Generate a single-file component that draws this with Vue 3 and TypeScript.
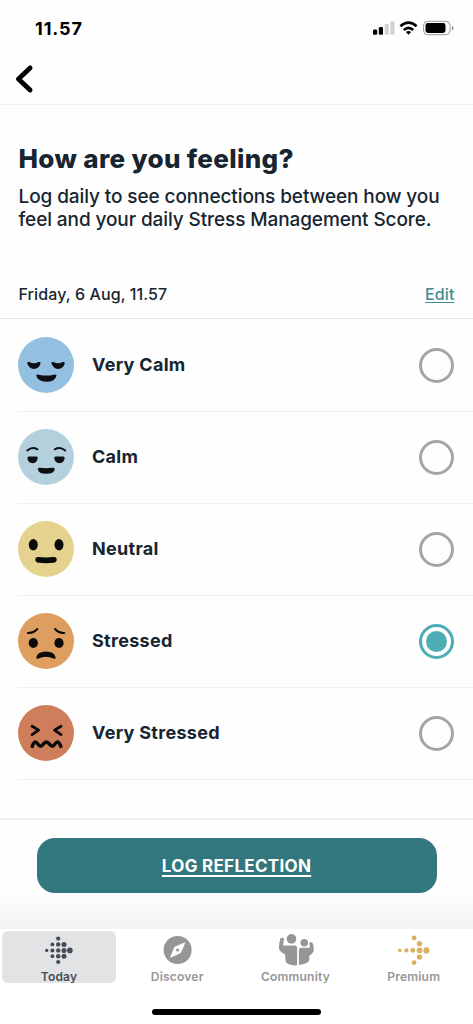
<script setup lang="ts">
import { ref } from 'vue'

interface Mood {
  id: string
  label: string
  color: string
}

interface Dot {
  x: number
  y: number
  r: number
}

const moods: Mood[] = [
  { id: 'very-calm', label: 'Very Calm', color: '#93bfe0' },
  { id: 'calm', label: 'Calm', color: '#b5d0dd' },
  { id: 'neutral', label: 'Neutral', color: '#e4d28e' },
  { id: 'stressed', label: 'Stressed', color: '#de9e60' },
  { id: 'very-stressed', label: 'Very Stressed', color: '#cf7e5b' },
]

const tabs = ['Today', 'Discover', 'Community', 'Premium']

const selected = ref('stressed')
const activeTab = ref('Today')

const todayDots: Dot[] = [
  { x: 17.2, y: 6.6, r: 2.1 },
  { x: 11.4, y: 12.4, r: 1.9 },
  { x: 17.2, y: 12.4, r: 2.2 },
  { x: 23, y: 12.4, r: 2.5 },
  { x: 5.7, y: 18.4, r: 1.7 },
  { x: 11.4, y: 18.4, r: 2 },
  { x: 17.2, y: 18.4, r: 2.2 },
  { x: 23, y: 18.4, r: 2.5 },
  { x: 28.9, y: 18.4, r: 2.8 },
  { x: 11.4, y: 24.2, r: 1.9 },
  { x: 17.2, y: 24.2, r: 2.2 },
  { x: 23, y: 24.2, r: 2.5 },
  { x: 17.2, y: 30, r: 2.1 },
]

const premiumDots: Dot[] = [
  { x: 18.1, y: 6, r: 2.4 },
  { x: 23.5, y: 11.6, r: 2.7 },
  { x: 3.8, y: 18.4, r: 1.8 },
  { x: 10.4, y: 18.4, r: 2.1 },
  { x: 16.8, y: 18.4, r: 2.4 },
  { x: 23.5, y: 18.4, r: 2.8 },
  { x: 30.4, y: 18.4, r: 3.1 },
  { x: 23.5, y: 25.1, r: 2.7 },
  { x: 18.1, y: 30.6, r: 2.4 },
]
</script>

<template>
  <main class="screen">
    <header class="status">
      <span class="clock">11.57</span>
      <svg class="indicators" width="82" height="16" viewBox="0 0 82 16">
        <rect x="0" y="9.5" width="4.2" height="5.3" rx="1.2" fill="#000" />
        <rect x="5.8" y="7" width="4.2" height="7.8" rx="1.2" fill="#000" />
        <rect x="11.7" y="4" width="4.2" height="10.8" rx="1.2" fill="#d2d2d2" />
        <rect x="17.3" y="1.3" width="4.2" height="13.5" rx="1.2" fill="#d2d2d2" />
        <g fill="none" stroke="#000" stroke-width="2.6">
          <path d="M27.4 6.3Q35.5-1.2 43.6 6.3" />
          <path d="M30.8 10Q35.5 5.6 40.2 10" />
        </g>
        <path d="M32.9 12Q35.5 9.9 38.1 12L35.5 14.8Z" fill="#000" />
        <rect x="50.6" y="1.3" width="26.4" height="13.4" rx="4" fill="none" stroke="#999" />
        <rect x="52.5" y="3.1" width="20" height="9.9" rx="2.4" fill="#000" />
        <path d="M78.8 5.8Q80.6 6.5 80.6 8.2Q80.6 9.9 78.8 10.6Z" fill="#999" />
      </svg>
    </header>

    <nav class="topbar">
      <button class="back" aria-label="Back">
        <svg width="20" height="30" viewBox="0 0 20 30">
          <path d="M15.1 3.9L3.4 15L15.1 26.1" fill="none" stroke="#000" stroke-width="4.8" stroke-linecap="round" stroke-linejoin="round" />
        </svg>
      </button>
    </nav>

    <section class="intro">
      <h1>How are you feeling?</h1>
      <p>Log daily to see connections between how you<br />feel and your daily Stress Management Score.</p>
    </section>

    <div class="date-row">
      <span class="date">Friday, 6 Aug, 11.57</span>
      <a class="edit">Edit</a>
    </div>

    <ul class="moods">
      <li v-for="mood in moods" :key="mood.id" class="mood" @click="selected = mood.id">
        <svg class="face" width="56" height="56" viewBox="0 0 56 56">
          <circle cx="28" cy="28" r="28" :fill="mood.color" />
          <g v-if="mood.id === 'very-calm'" fill="#0c0f14">
            <path d="M9.2 26Q9.2 24.4 11.3 25.1Q16 27.6 20.4 25.1Q22.8 24.4 22.6 26.6Q20.8 32 16 32Q10.7 31.6 9.2 26Z" />
            <path d="M33.4 26Q33.4 24.4 35.5 25.1Q40.2 27.6 44.6 25.1Q47 24.4 46.8 26.6Q45 32 40.2 32Q34.9 31.6 33.4 26Z" />
            <path d="M18.2 38.6Q18.4 37 20.8 37.7Q28.4 39.5 35.8 37.7Q38.5 37 38.5 38.8Q37.2 44.8 28.4 44.8Q19.5 44.7 18.2 38.6Z" />
          </g>
          <g v-else-if="mood.id === 'calm'" fill="#0c0f14">
            <path d="M9.3 21.5Q14 17.3 19.4 20.3M36.8 20.3Q42.2 17.3 47.2 21.5" fill="none" stroke="#0c0f14" stroke-width="2" stroke-linecap="round" />
            <path d="M10.7 27.6H18.5Q19.9 27.7 19.7 29.3Q19 34.2 14.9 34.2Q9.9 34.2 9.4 29.3Q9.2 27.7 10.7 27.6Z" />
            <path d="M37.6 27.6H45.4Q46.8 27.7 46.6 29.3Q45.9 34.2 41.5 34.2Q37 34.2 36.3 29.3Q36.1 27.7 37.6 27.6Z" />
            <path d="M19.8 40.2Q19.8 38.5 22 38.8Q28.2 39.7 34.4 38.8Q36.7 38.5 36.7 40.2Q36.2 44.8 28.2 44.8Q20.3 44.8 19.8 40.2Z" />
          </g>
          <g v-else-if="mood.id === 'neutral'" fill="#0a0a0a">
            <ellipse cx="15.3" cy="23.7" rx="4.5" ry="5.7" />
            <ellipse cx="41" cy="23.7" rx="4.5" ry="5.7" />
            <path d="M20 36.1Q28 36.9 36 36.1Q38.6 36 38.7 38.8Q38.5 41.5 35.5 41.8Q28 42.5 20.5 41.8Q17.5 41.5 17.3 38.8Q17.5 36 20 36.1Z" />
          </g>
          <g v-else-if="mood.id === 'stressed'" fill="#0a0a0a">
            <path d="M9.8 19.9Q15.7 20.2 19.3 16M37 16Q40.5 20.2 46.3 19.9" fill="none" stroke="#0a0a0a" stroke-width="2" stroke-linecap="round" />
            <ellipse cx="15.3" cy="30" rx="4.6" ry="5" />
            <ellipse cx="41" cy="30" rx="4.6" ry="5" />
            <path d="M18.3 44.4Q19.5 38.7 28 38.6Q36.5 38.7 37.6 44.4Q37.7 46.3 35.3 45.6Q28 42 20.6 45.6Q18.2 46.3 18.3 44.4Z" />
          </g>
          <g v-else fill="none" stroke="#0a0a0a" stroke-width="2.8" stroke-linecap="round" stroke-linejoin="round">
            <path d="M14.1 21.2L20.6 25.1L14.1 29.6M43 21.2L36.5 25.1L43 29.6" />
            <path d="M14.2 41.4C15.2 38.5 16.2 36.9 17.5 36.9C19.4 36.9 20.4 41.3 22.5 41.3C24.8 41.3 25.8 36.9 28.4 36.9C31 36.9 32 41.3 34.3 41.3C36.4 41.3 37.4 36.9 39.3 36.9C40.8 36.9 41.8 38.5 42.8 41.4" stroke-width="3.5" />
          </g>
        </svg>
        <span class="label">{{ mood.label }}</span>
        <span class="radio" :class="{ checked: selected === mood.id }"></span>
      </li>
    </ul>

    <footer class="action">
      <button class="log">LOG REFLECTION</button>
    </footer>

    <nav class="tabs">
      <div v-for="tab in tabs" :key="tab" class="tab-cell">
        <button class="tab" :class="{ active: activeTab === tab }" @click="activeTab = tab">
          <svg width="36" height="36" viewBox="0 0 36 36">
            <g v-if="tab === 'Today'" fill="#454c58">
              <circle v-for="(d, i) in todayDots" :key="i" :cx="d.x" :cy="d.y" :r="d.r" />
            </g>
            <g v-else-if="tab === 'Discover'">
              <circle cx="18.6" cy="18" r="14" fill="#969696" />
              <path d="M25.7 10.9L21.5 20.7L11.7 25.1L15.8 15.2Z" fill="#fff" stroke="#fff" stroke-linejoin="round" />
              <circle cx="18.6" cy="18" r="1.6" fill="#969696" />
            </g>
            <g v-else-if="tab === 'Community'" fill="#969696" transform="translate(-4.9 -0.3)">
              <circle cx="18.4" cy="7.2" r="4.8" />
              <circle cx="31.2" cy="11.1" r="3.8" />
              <path d="M7.4 6.3Q10.7 5.2 10.9 7.4L9.9 13.7H21.7Q24 13.9 24 16V33.6Q17.3 34.2 13.1 30.8Q12.2 29.8 12.1 22.8Q6.3 20.4 5.8 16.4Q5.8 11.5 7.4 6.3Z" />
              <path d="M25.8 33.4V18.4Q25.8 16 28 16H36.8L36.2 11.7Q36.2 9.7 39.3 10.9Q40.8 14.4 40.7 18.6Q40 22 36.2 23.7V28.6Q34.8 32.2 25.8 33.4Z" />
            </g>
            <g v-else fill="#ddb05e">
              <circle v-for="(d, i) in premiumDots" :key="i" :cx="d.x" :cy="d.y" :r="d.r" />
            </g>
          </svg>
          <span>{{ tab }}</span>
        </button>
      </div>
    </nav>
    <div class="home"><i></i></div>
  </main>
</template>

<style>
body {
  margin: 0;
  background: #fff;
}
</style>

<style scoped>
.screen {
  display: flex;
  flex-direction: column;
  width: 473px;
  height: 1024px;
  overflow: hidden;
  background: #fefefe;
  color: #172530;
  font-family: Inter, 'Liberation Sans', sans-serif;
  white-space: nowrap;
}
button {
  border: 0;
  padding: 0;
  background: none;
  font-family: inherit;
}
svg {
  display: block;
  overflow: visible;
}
.status {
  display: flex;
  justify-content: space-between;
  height: 50px;
  padding: 0 18px 0 35px;
  box-sizing: border-box;
}
.clock {
  margin-top: 18px;
  font-size: 18px;
  line-height: 22px;
  font-weight: 700;
  color: #000;
  letter-spacing: 0.9px;
}
.indicators {
  margin-top: 20px;
}
.topbar {
  height: 55px;
  box-sizing: border-box;
  padding: 14px 0 0 15px;
  border-bottom: 1px solid #efefef;
}
.back {
  display: block;
}
.intro {
  height: 164px;
  padding: 37px 18.5px 0;
  box-sizing: border-box;
}
h1 {
  margin: 0;
  font-size: 26px;
  line-height: 34px;
  font-weight: 800;
  letter-spacing: 0.35px;
}
p {
  margin: 9px 0 0;
  font-size: 19px;
  line-height: 23px;
  font-weight: 500;
  letter-spacing: -0.1px;
}
.date-row {
  display: flex;
  justify-content: space-between;
  align-items: center;
  height: 50px;
  padding: 0 18.5px;
  box-sizing: border-box;
  border-bottom: 1px solid #e3e4e5;
  font-size: 16px;
  font-weight: 500;
  letter-spacing: 0.1px;
}
.edit {
  color: #3d8d92;
  text-decoration: underline;
  text-underline-offset: 2px;
}
.moods {
  list-style: none;
  margin: 0;
  padding: 1px 0 0 18px;
}
.mood {
  display: flex;
  align-items: center;
  height: 92px;
  padding-right: 19px;
  box-sizing: border-box;
  border-bottom: 1px solid #f0f0f1;
}
.face {
  margin-bottom: 2px;
}
.label {
  flex: 1;
  margin: 0 0 2px 18px;
  font-size: 18px;
  font-weight: 700;
  letter-spacing: 0.3px;
}
.radio {
  display: grid;
  place-items: center;
  width: 35px;
  height: 35px;
  box-sizing: border-box;
  border: 3px solid #a3a6a9;
  border-radius: 50%;
}
.radio.checked {
  border-color: #4eacb5;
}
.radio.checked::after {
  content: '';
  width: 21px;
  height: 21px;
  border-radius: 50%;
  background: #4eacb5;
}
.action {
  height: 111px;
  margin-top: 38px;
  padding: 18px 36.5px 0;
  box-sizing: border-box;
  border-top: 2px solid #efefef;
  background: linear-gradient(#fefefe 65%, #f3f3f3);
}
.log {
  display: block;
  width: 400px;
  height: 55px;
  border-radius: 18px;
  background: #33777e;
  color: #fff;
  font-size: 17px;
  font-weight: 700;
  letter-spacing: 0.3px;
  text-decoration: underline;
  text-decoration-thickness: 1.5px;
  text-underline-offset: 3px;
}
.tabs {
  display: grid;
  grid-template-columns: repeat(4, 118.25px);
  height: 71px;
  background: #fff;
}
.tab-cell {
  padding: 2px 2px 0;
}
.tab {
  display: flex;
  flex-direction: column;
  align-items: center;
  width: 114px;
  height: 52px;
  box-sizing: border-box;
  padding-top: 1px;
  border-radius: 6px;
  color: #969696;
  font-size: 12px;
  line-height: 15px;
  font-weight: 600;
  letter-spacing: 0.2px;
}
.tab svg {
  flex: none;
}
.tab span {
  margin-top: 1px;
}
.tab.active {
  background: #e1e3e5;
  color: #454c58;
}
.home {
  flex: 1;
  display: flex;
  justify-content: center;
  align-items: flex-start;
  background: #fff;
}
.home i {
  width: 169px;
  height: 6px;
  margin-top: 9px;
  border-radius: 3px;
  background: #000;
}
</style>
